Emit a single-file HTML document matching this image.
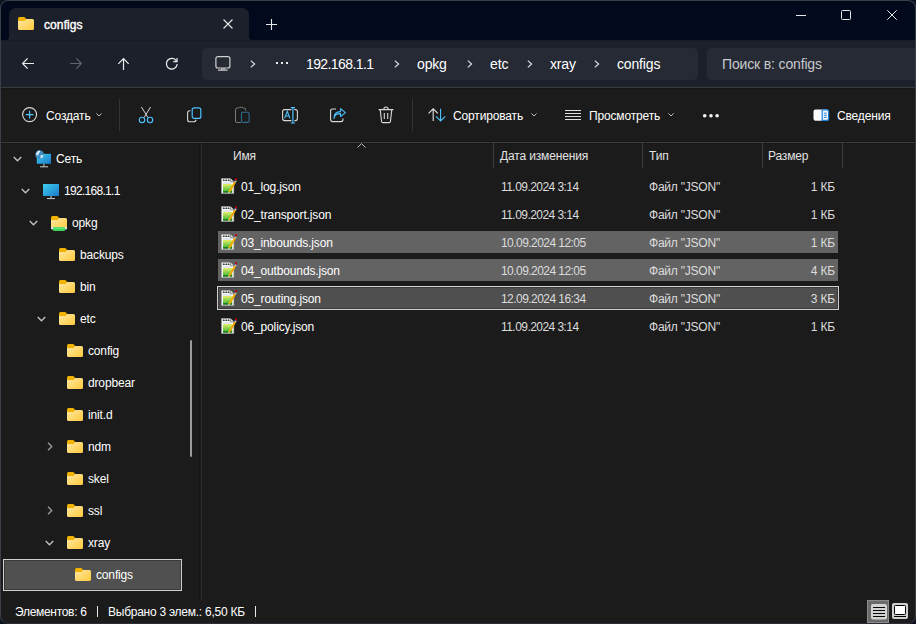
<!DOCTYPE html>
<html><head><meta charset="utf-8">
<style>
*{margin:0;padding:0;box-sizing:border-box}
html,body{width:916px;height:624px;overflow:hidden;background:#0b1120}
body{position:relative;font-family:"Liberation Sans",sans-serif;color:#fff;font-size:12px}
.a{position:absolute}
svg{position:absolute;overflow:visible}
#win{left:0;top:0;width:916px;height:624px;border-radius:8px;overflow:hidden;background:#1b1b1b}
#title{left:0;top:0;width:916px;height:40px;background:#010a1c}
#tab{left:9px;top:8px;width:240px;height:32px;background:#1c202b;border-radius:7px 7px 0 0}
#nav{left:0;top:40px;width:916px;height:47px;background:#1c202b}
#addr{left:202px;top:48px;width:496px;height:32px;background:#262a34;border-radius:5px}
#search{left:707px;top:48px;width:220px;height:32px;background:#262a34;border-radius:5px}
#navline{left:0;top:87px;width:916px;height:1px;background:#3a3a3a;box-shadow:0 1px 0 #171717}
#cmd{left:0;top:89px;width:916px;height:54px;background:#1b1b1b}
#hline{left:0;top:142px;width:916px;height:1px;background:#3c3c3c;box-shadow:0 1px 0 #171717,0 -1px 0 #171717}
#border{left:0;top:0;width:916px;height:624px;border-radius:8px;border:1px solid #3a3e47;border-bottom-color:#2a2e36}
.t{position:absolute;white-space:nowrap;line-height:1;letter-spacing:-0.15px}
.sep{position:absolute;width:1px;background:#3c3c3c}
.sel{position:absolute;background:#636363}
.d{color:#dcdcdc}
</style></head><body>
<svg width="0" height="0" style="position:absolute">
<defs>
<linearGradient id="fg" x1="0" y1="0" x2="1" y2="1"><stop offset="0" stop-color="#ffe9a6"/><stop offset="1" stop-color="#ffc93a"/></linearGradient>
<linearGradient id="mg" x1="0" y1="0" x2="1" y2="1"><stop offset="0" stop-color="#3fd0f0"/><stop offset="1" stop-color="#1a78c8"/></linearGradient>
<linearGradient id="gg" x1="0" y1="0" x2="0" y2="1"><stop offset="0" stop-color="#e8ee6a"/><stop offset="1" stop-color="#2fb52f"/></linearGradient>
<symbol id="folder" viewBox="0 0 16 13">
<path d="M1.5 0H6.3L8.3 2V4H0V1.5Q0 0 1.5 0Z" fill="#efb300"/>
<path d="M0 4H6.6L8.3 2H14.5Q16 2 16 3.5V11.5Q16 13 14.5 13H1.5Q0 13 0 11.5Z" fill="url(#fg)"/>
</symbol>
<symbol id="json" viewBox="0 0 16 16">
<path d="M0.5 0.4H9.4L12.8 3.8V15.6H0.5Z" fill="#fbfbfb" stroke="#a0a0a0" stroke-width="0.5"/>
<path d="M9.4 0.4V3.8H12.8" fill="#dcdcdc" stroke="#555" stroke-width="0.6"/>
<path d="M1.8 3Q1.8 1.2 2.8 1.2Q3.8 1.2 3.8 3Z M4.2 3Q4.2 1.2 5.2 1.2Q6.2 1.2 6.2 3Z M6.6 3Q6.6 1.2 7.6 1.2Q8.6 1.2 8.6 3Z" fill="#3a3a3a"/>
<rect x="2" y="4.6" width="8.5" height="0.8" fill="#b9c9d9"/>
<rect x="2" y="6" width="9.2" height="8.4" fill="url(#gg)"/>
<rect x="2" y="13.4" width="9.2" height="1.2" fill="#0b5e0b"/>
<path d="M7.4 13.2L13.3 3.4L15 4.4L9.1 14.2Z" fill="#f5a800"/>
<path d="M7.4 13.2L9.1 14.2L7.2 15.2Z" fill="#ffe8a8"/>
<path d="M13.3 3.4L14.1 2.1L15.8 3.1L15 4.4Z" fill="#a8c8e8"/>
<circle cx="15.1" cy="1.4" r="1.2" fill="#c00000"/>
</symbol>
<symbol id="chev" viewBox="0 0 10 6"><path d="M0.8 0.8L5 5L9.2 0.8" fill="none" stroke="#c4c4c4" stroke-width="1.45"/></symbol>
<symbol id="chevr" viewBox="0 0 6 10"><path d="M0.8 0.8L5 5L0.8 9.2" fill="none" stroke="#a0a0a0" stroke-width="1.4"/></symbol>
</defs></svg>

<div class="a" id="win">
<div class="a" id="title"></div>
<div class="a" id="tab"></div>
<div class="a" id="nav"></div>
<div class="a" id="addr"></div>
<div class="a" id="search"></div>
<div class="a" id="navline"></div>
<div class="a" style="left:0;top:40px;width:916px;height:1px;background:#171b24"></div>
<div class="a" style="left:6px;top:37px;width:3px;height:3px;background:radial-gradient(circle at 0 0,#010a1c 2.6px,#1c202b 3.4px)"></div>
<div class="a" style="left:249px;top:37px;width:3px;height:3px;background:radial-gradient(circle at 100% 0,#010a1c 2.6px,#1c202b 3.4px)"></div>
<div class="a" id="cmd"></div>
<div class="a" id="hline"></div>

<!-- tab -->
<svg style="left:18px;top:17px" width="16" height="13"><use href="#folder"/></svg>
<div class="t" style="left:44px;top:19px;letter-spacing:0.1px;-webkit-text-stroke:0.4px #fff">configs</div>
<svg style="left:223px;top:19px" width="10" height="10"><path d="M0.5 0.5L9.5 9.5M9.5 0.5L0.5 9.5" stroke="#e8e8e8" stroke-width="1.1"/></svg>
<svg style="left:266px;top:19px" width="11" height="11"><path d="M5.5 0V11M0 5.5H11" stroke="#e8e8e8" stroke-width="1.1"/></svg>
<!-- window controls -->
<svg style="left:796px;top:15px" width="10" height="1"><path d="M0 0.5H10" stroke="#e8e8e8" stroke-width="1"/></svg>
<svg style="left:841px;top:10px" width="10" height="10"><rect x="0.5" y="0.5" width="9" height="9" rx="1" fill="none" stroke="#e8e8e8" stroke-width="1"/></svg>
<svg style="left:887px;top:10px" width="10" height="10"><path d="M0.3 0.3L9.7 9.7M9.7 0.3L0.3 9.7" stroke="#e8e8e8" stroke-width="1"/></svg>

<!-- nav buttons -->
<svg style="left:22px;top:58px" width="12" height="12"><path d="M12 5.5H0.7M5.6 0.3L0.6 5.5L5.6 10.7" fill="none" stroke="#ececec" stroke-width="1.2"/></svg>
<svg style="left:70px;top:58px" width="12" height="12"><path d="M0 5.5H11.3M6.4 0.3L11.4 5.5L6.4 10.7" fill="none" stroke="#5f636b" stroke-width="1.2"/></svg>
<svg style="left:118px;top:58px" width="12" height="12"><path d="M5.5 12V0.7M0.3 5.9L5.5 0.7L10.7 5.9" fill="none" stroke="#ececec" stroke-width="1.2"/></svg>
<svg style="left:166px;top:58px" width="12" height="12"><path d="M10.6 3.2A5.4 5.4 0 1 0 11.2 6" fill="none" stroke="#ececec" stroke-width="1.2"/><path d="M7.2 3.6H11V0" fill="none" stroke="#ececec" stroke-width="1.2"/></svg>

<!-- address -->
<svg style="left:215px;top:56px" width="16" height="15"><rect x="0.9" y="0.6" width="14" height="11.4" rx="2" fill="none" stroke="#d0d0d0" stroke-width="1.2"/><path d="M6.8 12V13.6M9 12V13.6M3 14.2H12.6" stroke="#d0d0d0" stroke-width="1.2"/></svg>
<svg style="left:250px;top:60px" width="6" height="8"><path d="M0.8 0.6L4.6 4L0.8 7.4" fill="none" stroke="#dcdcdc" stroke-width="1.2"/></svg>
<div class="a" style="left:276px;top:62px;width:2px;height:2px;background:#eee"></div>
<div class="a" style="left:281px;top:62px;width:2px;height:2px;background:#eee"></div>
<div class="a" style="left:286px;top:62px;width:2px;height:2px;background:#eee"></div>
<div class="t" style="left:306px;top:57px;font-size:14px;letter-spacing:-0.6px">192.168.1.1</div>
<svg style="left:394px;top:60px" width="6" height="8"><path d="M0.8 0.6L4.6 4L0.8 7.4" fill="none" stroke="#dcdcdc" stroke-width="1.2"/></svg>
<div class="t" style="left:417px;top:57px;font-size:14px">opkg</div>
<svg style="left:467px;top:60px" width="6" height="8"><path d="M0.8 0.6L4.6 4L0.8 7.4" fill="none" stroke="#dcdcdc" stroke-width="1.2"/></svg>
<div class="t" style="left:490px;top:57px;font-size:14px">etc</div>
<svg style="left:527px;top:60px" width="6" height="8"><path d="M0.8 0.6L4.6 4L0.8 7.4" fill="none" stroke="#dcdcdc" stroke-width="1.2"/></svg>
<div class="t" style="left:550px;top:57px;font-size:14px">xray</div>
<svg style="left:594px;top:60px" width="6" height="8"><path d="M0.8 0.6L4.6 4L0.8 7.4" fill="none" stroke="#dcdcdc" stroke-width="1.2"/></svg>
<div class="t" style="left:617px;top:57px;font-size:14px">configs</div>
<div class="t" style="left:722px;top:57px;font-size:14px;color:#c8c9cc">Поиск в: configs</div>

<!-- command bar -->
<svg style="left:22px;top:107px" width="16" height="16"><circle cx="7.6" cy="7.6" r="7" fill="none" stroke="#d8d8d8" stroke-width="1.1"/><path d="M7.6 3.8V11.4M3.8 7.6H11.4" stroke="#4cc2ff" stroke-width="1.2"/></svg>
<div class="t" style="left:46px;top:110px">Создать</div>
<svg style="left:96px;top:113px" width="6" height="4"><path d="M0.4 0.4L3 3L5.6 0.4" fill="none" stroke="#bdbdbd" stroke-width="1"/></svg>
<div class="sep" style="left:119px;top:99px;height:32px;background:#333"></div>
<svg style="left:138px;top:106px" width="16" height="18"><path d="M3.4 1L10 11.6M12.6 1L6 11.6" stroke="#d8d8d8" stroke-width="1"/><circle cx="4" cy="14" r="2.7" fill="none" stroke="#4cc2ff" stroke-width="1.1"/><circle cx="12" cy="14" r="2.7" fill="none" stroke="#4cc2ff" stroke-width="1.1"/></svg>
<svg style="left:187px;top:107px" width="15" height="16"><path d="M3.4 3.8H2.8Q0.6 3.8 0.6 6V12.8Q0.6 14.8 2.8 14.8H6.8Q8.8 14.8 9 12.6" fill="none" stroke="#d8d8d8" stroke-width="1.1"/><rect x="5.2" y="0.8" width="8.6" height="10.6" rx="2" fill="none" stroke="#4cc2ff" stroke-width="1.2"/></svg>
<svg style="left:235px;top:107px" width="15" height="16"><path d="M10.6 3.6V2.4Q10.6 1 9.2 1H8.2Q7.6 0.2 5.8 0.2Q4 0.2 3.4 1H2Q0.5 1 0.5 2.6V14Q0.5 15.5 2 15.5H5.8" fill="none" stroke="#7c7c7c" stroke-width="1"/><rect x="6.5" y="5.2" width="7.6" height="10.2" rx="1.4" fill="none" stroke="#2f6d8c" stroke-width="1.1"/></svg>
<svg style="left:282px;top:107px" width="16" height="17"><path d="M9.4 2.6H2.6Q0.6 2.6 0.6 4.6V11.6Q0.6 13.6 2.6 13.6H9.4M12.4 2.6H13.4Q15.4 2.6 15.4 4.6V11.6Q15.4 13.6 13.4 13.6H12.4" fill="none" stroke="#d8d8d8" stroke-width="1.1"/><path d="M10.9 0.6V16M8.8 0.6H13M8.8 16H13" stroke="#4cc2ff" stroke-width="1.2"/><path d="M2.6 11.4L5.3 4.4L8 11.4M3.6 9H7" fill="none" stroke="#4cc2ff" stroke-width="1.1"/></svg>
<svg style="left:330px;top:108px" width="16" height="15"><path d="M6 1H2.6Q0.6 1 0.6 3V11.6Q0.6 13.6 2.6 13.6H11Q13 13.6 13 11.6V10.6" fill="none" stroke="#d8d8d8" stroke-width="1.1"/><path d="M4 10.4Q4.2 5.6 10.6 5.6V8.6L15.4 4.6L10.6 0.6V3.6Q3.6 3.6 4 10.4Z" fill="none" stroke="#4cc2ff" stroke-width="1.1" stroke-linejoin="round"/></svg>
<svg style="left:378px;top:106px" width="16" height="18"><path d="M0.6 3.6H15.4M2.2 3.6L3.6 15.6Q3.8 16.6 4.8 16.6H11.2Q12.2 16.6 12.4 15.6L13.8 3.6M5.8 3.4Q5.8 1 8 1Q10.2 1 10.2 3.4M6.3 7V13M9.7 7V13" fill="none" stroke="#d8d8d8" stroke-width="1.1"/></svg>
<div class="sep" style="left:412px;top:99px;height:32px;background:#333"></div>
<svg style="left:428px;top:108px" width="18" height="14"><path d="M5.2 13V0.8M0.6 5.4L5.2 0.8L9.8 5.4" fill="none" stroke="#e0e0e0" stroke-width="1.1"/><path d="M12.6 0.8V13M8 8.4L12.6 13L17.2 8.4" fill="none" stroke="#4cc2ff" stroke-width="1.1"/></svg>
<div class="t" style="left:453px;top:110px">Сортировать</div>
<svg style="left:531px;top:113px" width="6" height="4"><path d="M0.4 0.4L3 3L5.6 0.4" fill="none" stroke="#bdbdbd" stroke-width="1"/></svg>
<svg style="left:565px;top:110px" width="16" height="11"><path d="M0 0.5H16M0 3.5H16M0 6.5H16M0 9.5H16" stroke="#e0e0e0" stroke-width="1"/></svg>
<div class="t" style="left:589px;top:110px">Просмотреть</div>
<svg style="left:668px;top:113px" width="6" height="4"><path d="M0.4 0.4L3 3L5.6 0.4" fill="none" stroke="#bdbdbd" stroke-width="1"/></svg>
<svg style="left:702px;top:113px" width="18" height="5"><circle cx="2.7" cy="2.8" r="1.8" fill="#f4f4f4"/><circle cx="9" cy="2.8" r="1.8" fill="#f4f4f4"/><circle cx="15.1" cy="2.8" r="1.8" fill="#f4f4f4"/></svg>
<svg style="left:813px;top:109px" width="17" height="13"><rect x="0.5" y="0.5" width="15.4" height="11.2" rx="2" fill="#fafafa"/><path d="M9.2 0.8H13.6Q15.6 0.8 15.6 2.8V9.4Q15.6 11.4 13.6 11.4H9.2Z" fill="#fafafa" stroke="#1a7fe0" stroke-width="1.2"/><path d="M10.8 4.2H13.8M10.8 6.3H13.8M10.8 8.4H13.8" stroke="#1a7fe0" stroke-width="1"/></svg>
<div class="t" style="left:837px;top:110px">Сведения</div>

<!-- nav pane -->
<svg style="left:13px;top:156px" width="9" height="6"><use href="#chev"/></svg>
<svg style="left:35px;top:150px" width="17" height="18"><rect x="1.8" y="3.8" width="14.2" height="10" fill="url(#mg)"/><path d="M8.9 13.8V16.4M5 16.8H13" stroke="#cfcfcf" stroke-width="1"/><circle cx="4.6" cy="4.6" r="4.3" fill="#3f8fc6"/><path d="M1.2 3.2Q2.4 0.6 4.8 0.5Q5.6 1.8 4.4 2.8Q3.2 3.4 3.6 4.8Q2.6 5.6 1.4 5.2Z" fill="#d8eefa"/><path d="M5.6 5.2Q7.4 4.4 8.6 5.6Q8 8 5.8 8.6Q5.2 7 5.6 5.2Z" fill="#cde6f6"/></svg>
<div class="t" style="left:56px;top:153px">Сеть</div>
<svg style="left:21px;top:188px" width="9" height="6"><use href="#chev"/></svg>
<svg style="left:43px;top:183px" width="16" height="16"><rect x="0" y="1" width="16" height="12" fill="url(#mg)"/><path d="M8 13V15.2M4 15.6H12" stroke="#cfcfcf" stroke-width="1"/></svg>
<div class="t" style="left:64px;top:185px;letter-spacing:-0.7px">192.168.1.1</div>
<svg style="left:29px;top:220px" width="9" height="6"><use href="#chev"/></svg>
<svg style="left:51px;top:216px" width="16" height="16"><use href="#folder" width="16" height="13"/><rect x="0" y="11" width="16" height="2.4" rx="0.8" fill="#e4e4e4"/><rect x="2" y="11" width="12" height="4" rx="1" fill="#3fd35a"/><rect x="2.5" y="11.6" width="11" height="1" fill="#7cf08c"/></svg>
<div class="t" style="left:72px;top:217px">opkg</div>
<svg style="left:59px;top:248px" width="16" height="13"><use href="#folder"/></svg>
<div class="t" style="left:80px;top:249px">backups</div>
<svg style="left:59px;top:280px" width="16" height="13"><use href="#folder"/></svg>
<div class="t" style="left:80px;top:281px">bin</div>
<svg style="left:37px;top:316px" width="9" height="6"><use href="#chev"/></svg>
<svg style="left:59px;top:312px" width="16" height="13"><use href="#folder"/></svg>
<div class="t" style="left:80px;top:313px">etc</div>
<svg style="left:67px;top:344px" width="16" height="13"><use href="#folder"/></svg>
<div class="t" style="left:88px;top:345px">config</div>
<svg style="left:67px;top:376px" width="16" height="13"><use href="#folder"/></svg>
<div class="t" style="left:88px;top:377px">dropbear</div>
<svg style="left:67px;top:408px" width="16" height="13"><use href="#folder"/></svg>
<div class="t" style="left:88px;top:409px">init.d</div>
<svg style="left:47px;top:442px" width="6" height="9"><use href="#chevr"/></svg>
<svg style="left:67px;top:440px" width="16" height="13"><use href="#folder"/></svg>
<div class="t" style="left:88px;top:441px">ndm</div>
<svg style="left:67px;top:472px" width="16" height="13"><use href="#folder"/></svg>
<div class="t" style="left:88px;top:473px">skel</div>
<svg style="left:47px;top:506px" width="6" height="9"><use href="#chevr"/></svg>
<svg style="left:67px;top:504px" width="16" height="13"><use href="#folder"/></svg>
<div class="t" style="left:88px;top:505px">ssl</div>
<svg style="left:45px;top:540px" width="9" height="6"><use href="#chev"/></svg>
<svg style="left:67px;top:536px" width="16" height="13"><use href="#folder"/></svg>
<div class="t" style="left:88px;top:537px">xray</div>
<div class="a" style="left:3px;top:559px;width:179px;height:32px;background:#505050;border:1px solid #d0d0d0;box-shadow:inset 0 0 0 1px #3a3a3a"></div>
<svg style="left:75px;top:568px" width="16" height="13"><use href="#folder"/></svg>
<div class="t" style="left:96px;top:569px">configs</div>
<div class="a" style="left:190px;top:340px;width:2px;height:117px;background:#9a9a9a;border-radius:1px"></div>
<div class="a" style="left:199px;top:143px;width:1px;height:457px;background:#151515"></div><div class="a" style="left:201px;top:143px;width:1px;height:457px;background:#2b2b2b"></div>

<!-- headers -->
<svg style="left:357px;top:143px" width="9" height="5"><path d="M0.5 4.5L4.5 0.6L8.5 4.5" fill="none" stroke="#bdbdbd" stroke-width="1"/></svg>
<div class="t" style="left:233px;top:150px;color:#e2e2e2">Имя</div>
<div class="t" style="left:500px;top:150px;color:#e2e2e2">Дата изменения</div>
<div class="t" style="left:649px;top:150px;color:#e2e2e2">Тип</div>
<div class="t" style="left:768px;top:150px;color:#e2e2e2">Размер</div>
<div class="sep" style="left:493px;top:143px;height:25px"></div>
<div class="sep" style="left:642px;top:143px;height:25px"></div>
<div class="sep" style="left:762px;top:143px;height:25px"></div>
<div class="sep" style="left:842px;top:143px;height:25px"></div>

<!-- rows -->
<div class="sel" style="left:218px;top:231px;width:620px;height:22px"></div>
<div class="sel" style="left:218px;top:259px;width:620px;height:22px"></div>
<div class="a" style="left:217px;top:286px;width:622px;height:24px;background:#4f4f4f;border:1px solid #d0d0d0;box-shadow:inset 0 0 0 1px #3a3a3a"></div>

<svg style="left:221px;top:178px" width="16" height="16"><use href="#json"/></svg>
<svg style="left:221px;top:206px" width="16" height="16"><use href="#json"/></svg>
<svg style="left:221px;top:234px" width="16" height="16"><use href="#json"/></svg>
<svg style="left:221px;top:262px" width="16" height="16"><use href="#json"/></svg>
<svg style="left:221px;top:290px" width="16" height="16"><use href="#json"/></svg>
<svg style="left:221px;top:318px" width="16" height="16"><use href="#json"/></svg>

<div class="t" style="left:241px;top:181px">01_log.json</div>
<div class="t" style="left:241px;top:209px">02_transport.json</div>
<div class="t" style="left:241px;top:237px">03_inbounds.json</div>
<div class="t" style="left:241px;top:265px">04_outbounds.json</div>
<div class="t" style="left:241px;top:293px">05_routing.json</div>
<div class="t" style="left:241px;top:321px">06_policy.json</div>

<div class="t d" style="left:501px;top:181px;letter-spacing:-0.55px">11.09.2024 3:14</div>
<div class="t d" style="left:501px;top:209px;letter-spacing:-0.55px">11.09.2024 3:14</div>
<div class="t d" style="left:501px;top:237px;letter-spacing:-0.55px">10.09.2024 12:05</div>
<div class="t d" style="left:501px;top:265px;letter-spacing:-0.55px">10.09.2024 12:05</div>
<div class="t d" style="left:501px;top:293px;letter-spacing:-0.55px">12.09.2024 16:34</div>
<div class="t d" style="left:501px;top:321px;letter-spacing:-0.55px">11.09.2024 3:14</div>

<div class="t d" style="letter-spacing:-0.22px;left:649px;top:181px">Файл "JSON"</div>
<div class="t d" style="letter-spacing:-0.22px;left:649px;top:209px">Файл "JSON"</div>
<div class="t d" style="letter-spacing:-0.22px;left:649px;top:237px">Файл "JSON"</div>
<div class="t d" style="letter-spacing:-0.22px;left:649px;top:265px">Файл "JSON"</div>
<div class="t d" style="letter-spacing:-0.22px;left:649px;top:293px">Файл "JSON"</div>
<div class="t d" style="letter-spacing:-0.22px;left:649px;top:321px">Файл "JSON"</div>

<div class="t d" style="right:81px;top:181px">1 КБ</div>
<div class="t d" style="right:81px;top:209px">1 КБ</div>
<div class="t d" style="right:81px;top:237px">1 КБ</div>
<div class="t d" style="right:81px;top:265px">4 КБ</div>
<div class="t d" style="right:81px;top:293px">3 КБ</div>
<div class="t d" style="right:81px;top:321px">1 КБ</div>

<!-- status -->
<div class="t" style="left:15px;top:606px;letter-spacing:-0.3px">Элементов: 6</div>
<div class="a" style="left:97px;top:606px;width:1px;height:11px;background:#e8e8e8"></div>
<div class="t" style="left:108px;top:606px;letter-spacing:-0.25px">Выбрано 3 элем.: 6,50 КБ</div>
<div class="a" style="left:255px;top:606px;width:1px;height:11px;background:#e8e8e8"></div>
<div class="a" style="left:867px;top:600px;width:22px;height:23px;background:#6a6a6a;border:1px solid #8a8a8a"></div>
<svg style="left:871px;top:604px" width="16" height="16"><rect x="0" y="0" width="16" height="15.5" rx="2" fill="#d2d2d2"/><path d="M2 3.5H14M2 6.5H14M2 9.5H14M2 12.5H14" stroke="#000" stroke-width="1"/></svg>
<svg style="left:892px;top:603px" width="16" height="16"><rect x="0" y="0" width="16" height="16" rx="2" fill="#cfcfcf"/><rect x="2.5" y="2.5" width="11" height="9" rx="0.8" fill="#fff" stroke="#000" stroke-width="1"/><path d="M2 13.5H14" stroke="#000" stroke-width="1"/></svg>
</div>
<div class="a" id="border"></div>
</body></html>
